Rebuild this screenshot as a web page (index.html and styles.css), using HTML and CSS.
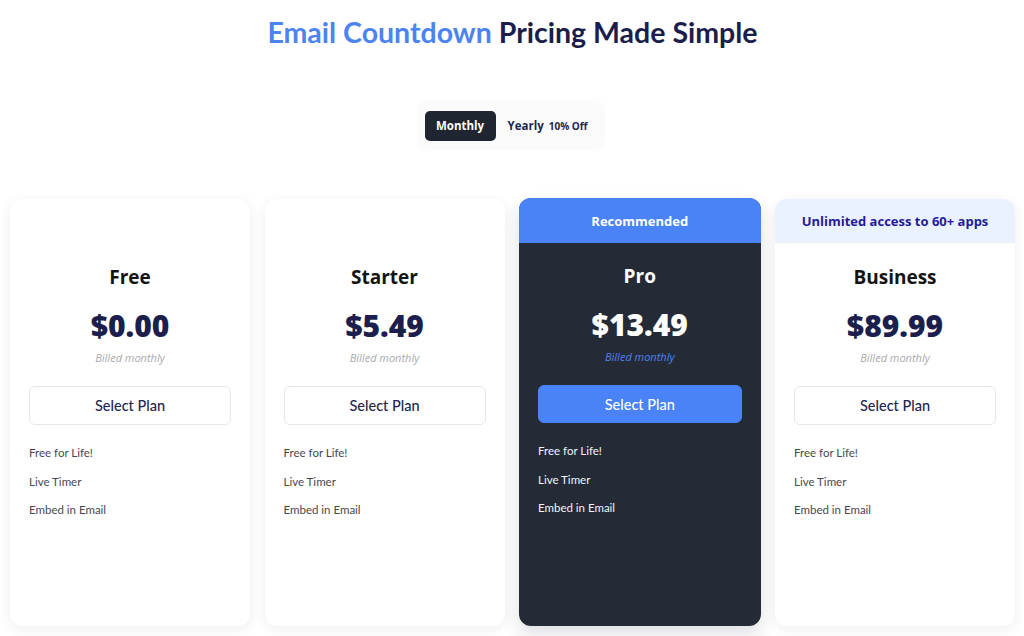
FILE: index.html
```html
<!DOCTYPE html>
<html>
<head>
<meta charset="utf-8">
<link rel="stylesheet" href="styles.css">
</head>
<body>
<main class="page">
  <h1 class="title"><span class="accent">Email Countdown</span> Pricing Made Simple</h1>
  <div class="toggle-row">
    <div class="toggle">
      <span class="opt active">Monthly</span>
      <span class="opt">Yearly <small>10% Off</small></span>
    </div>
  </div>
  <section class="cards">
    <div class="card">
      <div class="card-head"></div>
      <div class="card-body">
        <h2 class="name">Free</h2>
        <div class="price">$0.00</div>
        <div class="billed">Billed monthly</div>
        <button class="btn">Select Plan</button>
        <ul class="features"><li>Free for Life!</li><li>Live Timer</li><li>Embed in Email</li></ul>
      </div>
    </div>
    <div class="card">
      <div class="card-head"></div>
      <div class="card-body">
        <h2 class="name">Starter</h2>
        <div class="price">$5.49</div>
        <div class="billed">Billed monthly</div>
        <button class="btn">Select Plan</button>
        <ul class="features"><li>Free for Life!</li><li>Live Timer</li><li>Embed in Email</li></ul>
      </div>
    </div>
    <div class="card pro">
      <div class="card-head">Recommended</div>
      <div class="card-body">
        <h2 class="name">Pro</h2>
        <div class="price">$13.49</div>
        <div class="billed">Billed monthly</div>
        <button class="btn">Select Plan</button>
        <ul class="features"><li>Free for Life!</li><li>Live Timer</li><li>Embed in Email</li></ul>
      </div>
    </div>
    <div class="card business">
      <div class="card-head">Unlimited access to 60+ apps</div>
      <div class="card-body">
        <h2 class="name">Business</h2>
        <div class="price">$89.99</div>
        <div class="billed">Billed monthly</div>
        <button class="btn">Select Plan</button>
        <ul class="features"><li>Free for Life!</li><li>Live Timer</li><li>Embed in Email</li></ul>
      </div>
    </div>
  </section>
</main>
</body>
</html>
```
FILE: styles.css
```css
* { box-sizing: border-box; }
html, body { margin: 0; padding: 0; background: #ffffff; }
body { font-family: "Open Sans", "Noto Sans", sans-serif; width: 1024px; height: 636px; overflow: hidden; }
.page { padding: 0 9px 0 10px; }
.title {
  margin: 0;
  padding-top: 15px;
  height: 49px;
  text-align: center;
  font-family: "Lato", sans-serif;
  font-weight: 700;
  font-size: 28.5px;
  line-height: 34px;
  color: #1b1e4b;
  letter-spacing: 0;
}
.title .accent { color: #4c84ef; }
.toggle-row { display: flex; justify-content: center; margin-top: 54px; padding-right: 3px; }
.toggle {
  display: flex;
  align-items: center;
  gap: 12px;
  height: 45px;
  padding: 0 16px 0 6px;
  background: #fbfbfc;
  border-radius: 6px;
  box-shadow: 0 0 6px rgba(0,0,0,0.04);
}
.opt {
  display: flex;
  align-items: center;
  gap: 5px;
  height: 30px;
  font-size: 11.5px;
  font-weight: 700;
  color: #1e2550;
  line-height: 14px;
  white-space: nowrap;
}
.opt small { font-size: 10px; font-weight: 700; line-height: 14px; }
.opt.active {
  justify-content: center;
  background: #1f2531;
  color: #ffffff;
  border-radius: 5px;
  width: 71px;
}
.cards {
  display: grid;
  grid-template-columns: 240px 240px 241.5px 240px;
  column-gap: 14.5px;
  margin-top: 51px;
}
.card {
  height: 427px;
  background: #ffffff;
  border-radius: 12px;
  box-shadow: 0 3px 14px rgba(20,30,50,0.07);
  overflow: hidden;
  display: flex;
  flex-direction: column;
}
.card-head {
  height: 44px;
  display: flex;
  align-items: center;
  justify-content: center;
  font-size: 13px;
  font-weight: 700;
}
.card-body { padding: 0 19px; text-align: center; }
.name {
  margin: 22px 0 0;
  font-size: 19px;
  line-height: 24px;
  font-weight: 700;
  color: #141414;
}
.price {
  margin-top: 19px;
  font-size: 30px;
  line-height: 36px;
  font-weight: 800;
  color: #1c1f4e;
}
.billed {
  margin-top: 7px;
  font-size: 11px;
  line-height: 14px;
  font-style: italic;
  color: #a9a9ad;
}
.btn {
  display: block;
  width: 100%;
  height: 39px;
  margin-top: 21px;
  border: 1px solid #e6e7eb;
  border-radius: 6px;
  background: #ffffff;
  font-family: "Lato", sans-serif;
  font-size: 14.5px;
  font-weight: 500;
  color: #22254e;
}
.features {
  list-style: none;
  margin: 20px 0 0;
  padding: 0;
  text-align: left;
  display: flex;
  flex-direction: column;
  gap: 12.5px;
}
.features li {
  font-family: "Lato", sans-serif;
  font-size: 11.5px;
  line-height: 16px;
  color: #474750;
}
.pro {
  background: #252b36;
  margin-top: -1px;
  height: 428px;
  box-shadow: 0 8px 18px rgba(20,30,50,0.14);
}
.pro .card-head { background: #4a82f7; color: #ffffff; height: 45px; }
.pro .name { color: #ffffff; margin-top: 21px; }
.pro .price { color: #ffffff; }
.pro .billed { color: #4c84ef; }
.pro .btn { background: #4a82f7; border-color: #4a82f7; color: #ffffff; height: 38px; margin-top: 21px; }
.pro .features { margin-top: 20px; }
.pro .features li { color: #f2f3f5; }
.business .card-head { background: #e9f2fe; color: #251b9a; }
```
